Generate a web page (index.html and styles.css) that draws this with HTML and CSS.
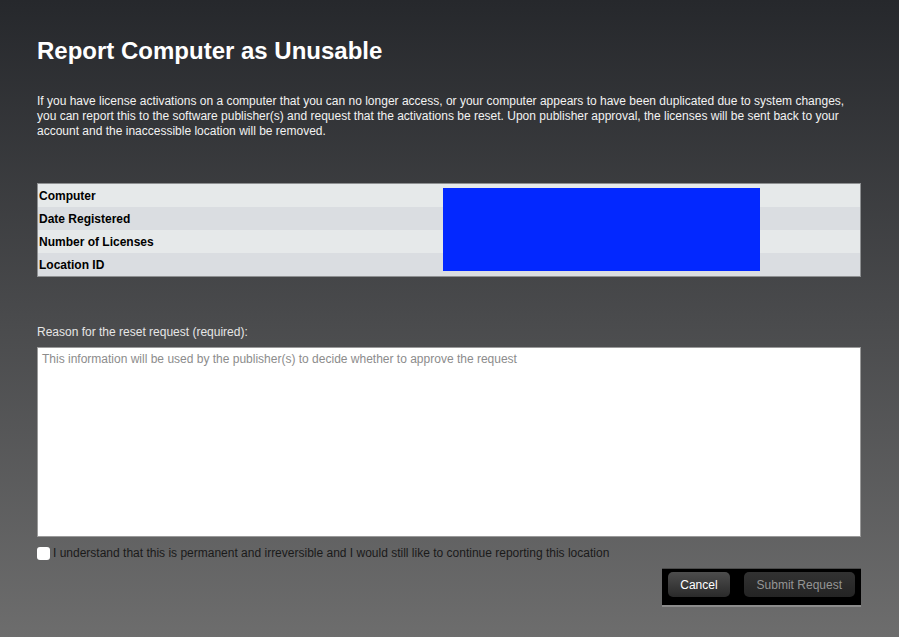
FILE: index.html
```html
<!DOCTYPE html>
<html lang="en">
<head>
    <meta charset="UTF-8">
    <title>Report Computer as Unusable</title>
    <link rel="stylesheet" href="styles.css">
</head>
<body>
    <div class="dialog">
        <h1 class="title">Report Computer as Unusable</h1>
        <p class="intro">If you have license activations on a computer that you can no longer access, or your computer appears to have been duplicated due to system changes, you can report this to the software publisher(s) and request that the activations be reset. Upon publisher approval, the licenses will be sent back to your account and the inaccessible location will be removed.</p>

        <div class="info-table">
            <div class="row"><span class="label">Computer</span></div>
            <div class="row alt"><span class="label">Date Registered</span></div>
            <div class="row"><span class="label">Number of Licenses</span></div>
            <div class="row alt"><span class="label">Location ID</span></div>
            <div class="redacted"></div>
        </div>

        <label class="reason-label" for="reason">Reason for the reset request (required):</label>
        <textarea id="reason" class="reason" placeholder="This information will be used by the publisher(s) to decide whether to approve the request"></textarea>

        <label class="confirm">
            <input type="checkbox" class="confirm-box">
            <span>I understand that this is permanent and irreversible and I would still like to continue reporting this location</span>
        </label>

        <div class="actions">
            <div class="button-bar">
                <button class="btn">Cancel</button>
                <button class="btn disabled" disabled>Submit Request</button>
            </div>
        </div>
    </div>
</body>
</html>
```

FILE: styles.css
```css
html, body {
    height: 100%;
}

body {
    margin: 0;
    background: linear-gradient(#26282c, #6d6d6d);
    color: #f2f2f2;
    font-family: "Liberation Sans", Arial, sans-serif;
    font-size: 12px;
}

.dialog {
    padding: 37px 38px 0 37px;
}

.title {
    margin: 0;
    font-size: 24px;
    line-height: 28px;
    font-weight: bold;
    color: #fff;
}

.intro {
    margin: 29px 0 0 0;
    line-height: 15px;
}

.info-table {
    position: relative;
    margin-top: 44px;
    border: 1px solid #8e9092;
    color: #000;
}

.row {
    height: 23px;
    line-height: 24px;
    padding-left: 1px;
    background-color: #e6e9ea;
}

.row.alt {
    background-color: #dadde1;
}

.label {
    font-weight: bold;
}

.redacted {
    position: absolute;
    left: 405px;
    top: 4px;
    width: 317px;
    height: 83px;
    background-color: #0328ff;
}

.reason-label {
    display: block;
    margin-top: 48px;
    line-height: 15px;
    color: #e6e6e6;
}

.reason {
    display: block;
    box-sizing: border-box;
    width: 100%;
    height: 190px;
    margin-top: 7px;
    padding: 4px 4px;
    border: 1px solid #9a9a9a;
    background-color: #fff;
    font-family: "Liberation Sans", Arial, sans-serif;
    font-size: 12px;
    resize: none;
}

.reason::placeholder {
    color: #8c8c8c;
}

.confirm {
    display: flex;
    align-items: center;
    gap: 3px;
    margin-top: 8px;
    color: #1a1a1a;
    line-height: 16px;
}

.confirm-box {
    width: 13px;
    height: 13px;
    margin: 0;
    appearance: none;
    background-color: #fff;
    border-radius: 3px;
}

.actions {
    display: flex;
    justify-content: flex-end;
    margin-top: 7px;
}

.button-bar {
    display: flex;
    gap: 14px;
    padding: 3px 6px 8px 6px;
    background-color: #000;
    border-top: 1px solid #4a4a4a;
    border-bottom: 2px solid #8c8c8c;
}

.btn {
    height: 25px;
    padding: 0 12px;
    border: none;
    border-radius: 5px;
    background: linear-gradient(#4d4d4d, #2a2a2a);
    color: #fff;
    font-family: "Liberation Sans", Arial, sans-serif;
    font-size: 12px;
    cursor: pointer;
}

.btn.disabled {
    padding: 0 13px;
    background: linear-gradient(#323232, #242424);
    color: #959595;
    cursor: default;
}
```
